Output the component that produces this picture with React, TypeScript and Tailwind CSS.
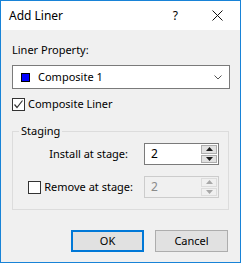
const font = { fontFamily: '"Noto Sans", "Open Sans", sans-serif' }

function Check({ checked }: { checked: boolean }) {
  return (
    <span className="flex h-[13px] w-[13px] shrink-0 items-center justify-center border border-[#333333] bg-white">
      {checked && (
        <svg width="11" height="11" viewBox="0 0 11 11">
          <polyline points="1.5,5.5 4,8.5 9.5,1.5" fill="none" stroke="#333333" strokeWidth="1.2" />
        </svg>
      )}
    </span>
  )
}

function Arrow({ up, color }: { up: boolean; color: string }) {
  return (
    <svg width="7" height="4" viewBox="0 0 7 4">
      <polygon points={up ? '0,4 7,4 3.5,0' : '0,0 7,0 3.5,4'} fill={color} />
    </svg>
  )
}

function Spin({ value, disabled }: { value: string; disabled?: boolean }) {
  const arrow = disabled ? '#a8a8a8' : '#1a1a1a'
  const btn = disabled ? 'border-[#dcdcdc] bg-[#f0f0f0]' : 'border-[#adadad] bg-[#e1e1e1]'
  return (
    <div
      className={`flex h-[22px] w-[75px] border ${
        disabled ? 'border-[#cccccc] bg-[#f0f0f0]' : 'border-[#7a7a7a] bg-white'
      }`}
    >
      <div className={`flex-1 pl-[6px] text-[12px] leading-[20px] ${disabled ? 'text-[#8a8a8a]' : 'text-black'}`}>
        {value}
      </div>
      <div className="flex w-[17px] flex-col gap-px p-px pl-0">
        <div className={`flex flex-1 items-center justify-center border ${btn}`}>
          <Arrow up color={arrow} />
        </div>
        <div className={`flex flex-1 items-center justify-center border ${btn}`}>
          <Arrow up={false} color={arrow} />
        </div>
      </div>
    </div>
  )
}

export default function App() {
  return (
    <div
      style={font}
      className="flex h-[263px] w-[241px] flex-col border border-[#1883d7] bg-[#f0f0f0] text-[11px] text-black"
    >
      {/* Title bar */}
      <div className="flex h-[29px] shrink-0 items-center bg-white pl-[8px]">
        <span className="flex-1 text-[12px]">Add Liner</span>
        <span className="mr-[34px] text-[12px]">?</span>
        <svg className="mr-[17px]" width="11" height="11" viewBox="0 0 11 11">
          <path d="M0.5 0.5 L10.5 10.5 M10.5 0.5 L0.5 10.5" stroke="#111111" strokeWidth="1" />
        </svg>
      </div>

      <div className="flex flex-col px-[11px]">
        <div className="mt-[12px] h-[16px] leading-[16px]">Liner Property:</div>

        {/* Combo */}
        <div className="mt-[7px] flex h-[24px] w-[218px] items-center border border-[#7a7a7a] bg-white">
          <span className="ml-[8px] h-[9px] w-[9px] border border-black bg-[#0000ff]" />
          <span className="ml-[8px] flex-1">Composite 1</span>
          <svg className="mr-[7px]" width="8" height="5" viewBox="0 0 8 5">
            <polyline points="0.5,0.5 4,4 7.5,0.5" fill="none" stroke="#555555" strokeWidth="1" />
          </svg>
        </div>

        <label className="mt-[7px] flex h-[16px] items-center gap-[3px]">
          <Check checked />
          <span>Composite Liner</span>
        </label>

        {/* Staging group */}
        <div className="relative mt-[19px] h-[79px] w-[217px] border border-[#dcdcdc]">
          <span className="absolute -top-[9px] left-[6px] bg-[#f0f0f0] px-[2px] leading-[16px]">Staging</span>
          <div className="mt-[11px] flex items-center">
            <span className="w-[115px] whitespace-nowrap text-right">Install at stage:</span>
            <span className="ml-[16px]">
              <Spin value="2" />
            </span>
          </div>
          <div className="mt-[11px] flex items-center">
            <div className="flex w-[120px] items-center justify-end gap-[3px] whitespace-nowrap">
              <Check checked={false} />
              <span>Remove at stage:</span>
            </div>
            <span className="ml-[11px]">
              <Spin value="2" disabled />
            </span>
          </div>
        </div>

        {/* Buttons */}
        <div className="mt-[20px] flex justify-end gap-[11px] pr-[1px]">
          <button className="h-[22px] w-[73px] border-2 border-[#0078d7] bg-[#e1e1e1] text-[11px]">OK</button>
          <button className="h-[22px] w-[73px] border border-[#adadad] bg-[#e1e1e1] text-[11px]">Cancel</button>
        </div>
      </div>
    </div>
  )
}
